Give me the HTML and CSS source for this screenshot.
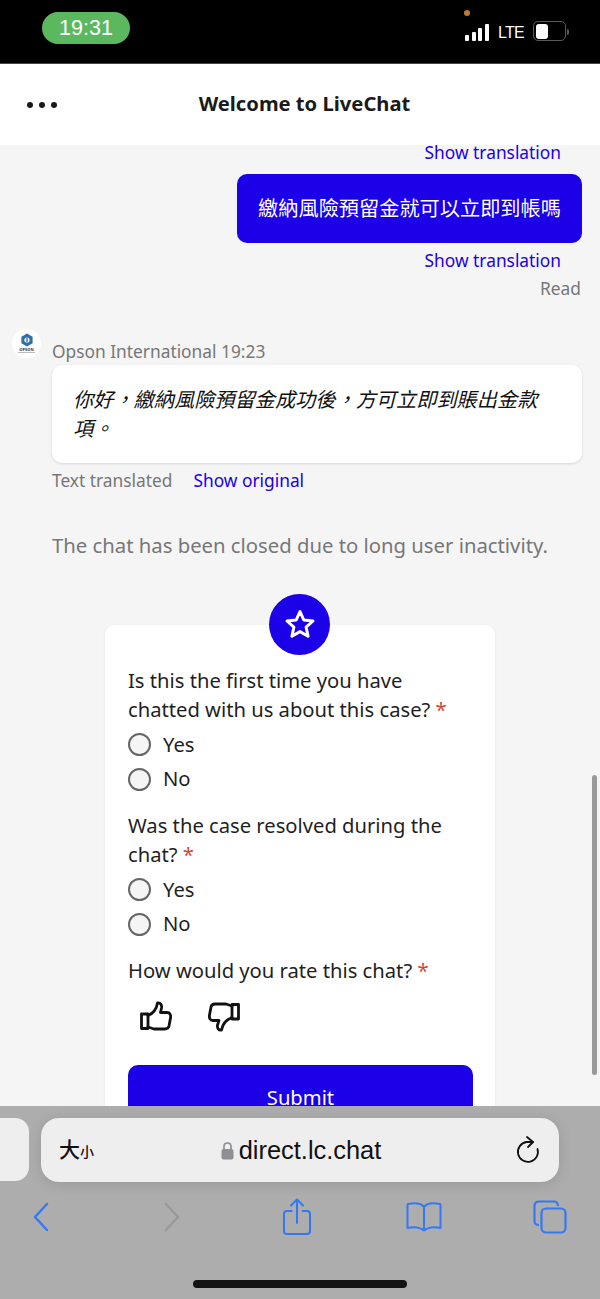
FILE: index.html
```html
<!DOCTYPE html>
<html>
	<head>
		<meta charset="utf-8">
		<title>Welcome to LiveChat</title>
		<meta name="viewport" content="width=device-width, initial-scale=1.0">
		<link rel="stylesheet" href="styles.css">
	</head>
	<body>
		<div class="status-bar">
			<div class="clock">19:31</div>
			<div class="status-right">
				<span class="mic-dot"></span>
				<div class="signal"><i></i><i></i><i></i><i></i></div>
				<span class="lte">LTE</span>
				<div class="battery"><span></span></div>
				<div class="battery-tip"></div>
			</div>
		</div>
		<header class="chat-header">
			<div class="dots"><i></i><i></i><i></i></div>
			<h1>Welcome to LiveChat</h1>
		</header>
		<main class="chat">
			<div class="link-row right first">Show translation</div>
			<div class="bubble-row"><div class="bubble-own">繳納風險預留金就可以立即到帳嗎</div></div>
			<div class="link-row right second">Show translation</div>
			<div class="read">Read</div>

			<div class="agent">
				<div class="avatar">
					<svg width="14" height="14" viewBox="0 0 14 14">
						<path d="M7 0.5 L12.6 3.7 V10.3 L7 13.5 L1.4 10.3 V3.7 Z" fill="#2f6ea8"/>
						<circle cx="7" cy="7" r="2.6" fill="#ffffff"/>
						<path d="M7 5 V9" stroke="#2f6ea8" stroke-width="1.4"/>
					</svg>
					<span class="avatar-name">OPSON</span>
					<span class="avatar-line"></span>
				</div>
				<div class="agent-body">
					<div class="agent-meta">Opson International 19:23</div>
					<div class="bubble-agent">你好，繳納風險預留金成功後，方可立即到賬出金款項。</div>
					<div class="translated"><span>Text translated</span><a>Show original</a></div>
				</div>
			</div>

			<p class="closed">The chat has been closed due to long user inactivity.</p>

			<div class="survey-wrap">
				<div class="star-badge">
					<svg width="36" height="36" viewBox="0 0 36 36">
						<path d="M18 4.5 L21.8 13 L31 14 L24.1 20.2 L26.1 29.3 L18 24.6 L9.9 29.3 L11.9 20.2 L5 14 L14.2 13 Z" fill="none" stroke="#ffffff" stroke-width="3" stroke-linejoin="round"/>
					</svg>
				</div>
				<form class="survey">
					<div class="question">Is this the first time you have chatted with us about this case? <em>*</em></div>
					<div class="option"><span class="radio"></span>Yes</div>
					<div class="option"><span class="radio"></span>No</div>
					<div class="question">Was the case resolved during the chat? <em>*</em></div>
					<div class="option"><span class="radio"></span>Yes</div>
					<div class="option"><span class="radio"></span>No</div>
					<div class="question">How would you rate this chat? <em>*</em></div>
					<div class="thumbs">
						<svg width="32" height="32" viewBox="0 0 32 32" fill="none" stroke="#111111" stroke-width="2.8" stroke-linejoin="round" stroke-linecap="round">
							<path d="M1.5 13 H8 V27.5 H1.5 Z"/>
							<path d="M8 14.5 C13 12.5 16.5 8 17.5 2 C20.5 1.5 22 4 21.5 7 L20.5 11.5 H27 C30 11.5 31 14 30.5 17 L29 25 C28.5 27 27 28 25 28 H14 L8 26"/>
						</svg>
						<svg width="32" height="32" viewBox="0 0 32 32" fill="none" stroke="#111111" stroke-width="2.8" stroke-linejoin="round" stroke-linecap="round">
							<path d="M30.5 3.5 H24 V18 H30.5 Z"/>
							<path d="M24 16.5 C19 18.5 14.5 23 13.5 29 C10.5 29.5 9 27 9.5 24 L11 19.5 H5 C2 19.5 1 17 1.5 14 L3 6 C3.5 4 5 3 7 3 H18 L24 5"/>
						</svg>
					</div>
					<button type="button" class="submit">Submit</button>
				</form>
			</div>
			<div class="scrollbar"></div>
		</main>
		<footer class="safari">
			<div class="tab-prev"></div>
			<div class="url-bar">
				<span class="text-size">大<small>小</small></span>
				<div class="url">
					<svg width="13" height="19" viewBox="0 0 13 19">
						<path d="M3 8 V5.5 C3 3.3 4.5 2 6.5 2 C8.5 2 10 3.3 10 5.5 V8" fill="none" stroke="#8e8e93" stroke-width="1.7"/>
						<rect x="0.5" y="8" width="12" height="10.5" rx="2" fill="#8e8e93"/>
					</svg>
					<span>direct.lc.chat</span>
				</div>
				<svg class="reload" width="24" height="30" viewBox="0 0 24 30" fill="none" stroke="#111111" stroke-width="1.8" stroke-linecap="round" stroke-linejoin="round">
					<path d="M17 8 H10.5 A10 10 0 1 0 21.5 15"/>
					<path d="M11 3 L17 8 L12 13"/>
				</svg>
			</div>
			<nav class="toolbar">
				<svg class="back" width="20" height="32" viewBox="0 0 20 32" fill="none" stroke="#3478f6" stroke-width="2.4" stroke-linecap="round" stroke-linejoin="round"><path d="M15 3 L3 16 L15 29"/></svg>
				<svg class="forward" width="20" height="32" viewBox="0 0 20 32" fill="none" stroke="#999999" stroke-width="2.4" stroke-linecap="round" stroke-linejoin="round"><path d="M5 3 L17 16 L5 29"/></svg>
				<svg class="share" width="30" height="38" viewBox="0 0 30 38" fill="none" stroke="#3478f6" stroke-width="2" stroke-linecap="round" stroke-linejoin="round"><path d="M9.5 13 H5 C3 13 2 14 2 16 V33 C2 35 3 36 5 36 H25 C27 36 28 35 28 33 V16 C28 14 27 13 25 13 H20.5"/><path d="M15 25 V2"/><path d="M9 7.5 L15 1.5 L21 7.5"/></svg>
				<svg class="book" width="36" height="32" viewBox="0 0 36 32" fill="none" stroke="#3478f6" stroke-width="2" stroke-linecap="round" stroke-linejoin="round"><path d="M18 6 C15 2 9 1.5 2 3 C1.5 3 1.5 3.5 1.5 4 V27 C8 25.5 14 26 18 29.5 C22 26 28 25.5 34.5 27 V4 C34.5 3.5 34.5 3 34 3 C27 1.5 21 2 18 6 Z"/><path d="M18 6 V29"/></svg>
				<svg class="tabs" width="34" height="34" viewBox="0 0 34 34" fill="none" stroke="#3478f6" stroke-width="2.2" stroke-linejoin="round"><path d="M6 25 C3 25 1.5 23.5 1.5 21 V6 C1.5 3 3 1.5 6 1.5 H21 C23.5 1.5 25 3 25 6"/><rect x="8.5" y="8.5" width="24" height="24" rx="4.5"/></svg>
			</nav>
			<div class="home-bar"></div>
		</footer>
	</body>
</html>
```

FILE: styles.css
```css
html, body {
	margin: 0;
	padding: 0;
	height: 100%;
}

body {
	width: 600px;
	height: 1299px;
	overflow: hidden;
	display: flex;
	flex-direction: column;
	background-color: #f5f5f5;
	font-family: "Noto Sans", "Noto Sans CJK TC", sans-serif;
	color: #1f1f1f;
}

.status-bar {
	height: 63px;
	flex: none;
	background-color: #000000;
	border-bottom: 1px solid #444444;
	display: flex;
	justify-content: space-between;
	position: relative;
}

.clock {
	margin: 12px 0 0 42px;
	width: 88px;
	height: 32px;
	border-radius: 16px;
	background-color: #5cb85f;
	color: #ffffff;
	font-family: "Liberation Sans", sans-serif;
	font-size: 21.5px;
	line-height: 32px;
	text-align: center;
}

.status-right {
	display: flex;
	align-items: flex-end;
	height: 41px;
	margin-right: 31px;
}

.mic-dot {
	position: absolute;
	left: 464px;
	top: 10px;
	width: 6px;
	height: 6px;
	border-radius: 50%;
	background-color: #c07a28;
}

.signal {
	display: flex;
	align-items: flex-end;
	gap: 2.5px;
}

.signal i {
	display: block;
	width: 4px;
	background-color: #ffffff;
	border-radius: 1px;
}

.signal i:nth-child(1) { height: 6px; }
.signal i:nth-child(2) { height: 9px; }
.signal i:nth-child(3) { height: 13px; }
.signal i:nth-child(4) { height: 17px; }

.lte {
	margin-left: 9px;
	color: #ffffff;
	font-family: "Liberation Sans", sans-serif;
	font-size: 16px;
	letter-spacing: -0.7px;
	line-height: 17px;
}

.battery {
	margin-left: 9px;
	width: 28px;
	height: 15px;
	border: 1.5px solid #5a5a5a;
	border-radius: 5px;
	padding: 1.5px;
	box-sizing: content-box;
}

.battery span {
	display: block;
	width: 12px;
	height: 100%;
	background-color: #ffffff;
	border-radius: 3px;
}

.battery-tip {
	width: 2px;
	height: 6px;
	margin: 0 0 6px 1px;
	background-color: #5a5a5a;
	border-radius: 0 2px 2px 0;
}

.chat-header {
	height: 81px;
	box-sizing: border-box;
	padding: 0 0 4px 9px;
	flex: none;
	background-color: #ffffff;
	position: relative;
	display: flex;
	align-items: center;
	justify-content: center;
}

.chat-header h1 {
	margin: 0;
	font-size: 20.2px;
	font-weight: 700;
	color: #1a1a1a;
}

.dots {
	position: absolute;
	left: 27px;
	top: 38px;
	display: flex;
	gap: 6px;
}

.dots i {
	width: 6px;
	height: 6px;
	border-radius: 50%;
	background-color: #1a1a1a;
}

.chat {
	flex: 1;
	min-height: 0;
	overflow: hidden;
	position: relative;
	font-size: 17.33px;
}

.link-row {
	color: #1c00e8;
	line-height: 24px;
}

.right {
	text-align: right;
	padding-right: 39px;
}

.first {
	margin-top: -5px;
}

.bubble-row {
	display: flex;
	justify-content: flex-end;
	padding: 10px 18px 0 0;
}

.bubble-own {
	width: 345px;
	height: 69px;
	box-sizing: border-box;
	border-radius: 10px;
	background-color: #1c00e8;
	color: #ffffff;
	font-size: 20.2px;
	line-height: 69px;
	text-align: center;
}

.second {
	margin-top: 5px;
}

.read {
	text-align: right;
	padding-right: 19px;
	color: #777777;
	line-height: 24px;
	margin-top: 4px;
}

.agent {
	display: flex;
	margin-top: 29px;
	padding-left: 12px;
}

.avatar {
	width: 29px;
	height: 29px;
	border-radius: 50%;
	background-color: #ffffff;
	flex: none;
	display: flex;
	flex-direction: column;
	align-items: center;
	padding-top: 4px;
	box-sizing: border-box;
}

.avatar-name {
	font-size: 4px;
	line-height: 5px;
	font-weight: 700;
	color: #1a3a5a;
}

.avatar-line {
	width: 17px;
	height: 1px;
	background-color: #bbbbbb;
}

.agent-body {
	margin-left: 11px;
	width: 530px;
}

.agent-meta {
	color: #777777;
	line-height: 24px;
	margin-top: 10px;
}

.bubble-agent {
	margin-top: 2px;
	background-color: #ffffff;
	border-radius: 10px;
	box-shadow: 0 1px 3px rgba(0, 0, 0, 0.12);
	padding: 20px 21px 20px;
	height: 98px;
	box-sizing: border-box;
	font-size: 20.2px;
	line-height: 29px;
	font-style: italic;
	color: #111111;
}

.translated {
	margin-top: 5px;
	line-height: 24px;
	color: #777777;
}

.translated a {
	color: #1c00e8;
	margin-left: 21px;
}

.closed {
	margin: 39px 0 0 52px;
	color: #777777;
	font-size: 20.3px;
	line-height: 28px;
}

.survey-wrap {
	position: relative;
	margin: 66px 0 0 105px;
	width: 390px;
}

.star-badge {
	position: absolute;
	left: 164px;
	top: -31px;
	width: 61px;
	height: 61px;
	border-radius: 50%;
	background-color: #1c00e8;
	display: flex;
	align-items: center;
	justify-content: center;
}

.survey {
	background-color: #ffffff;
	border-radius: 10px;
	box-shadow: 0 1px 3px rgba(0, 0, 0, 0.08);
	padding: 41px 23px 40px;
	font-size: 20.2px;
}

.question {
	line-height: 29px;
	width: 335px;
	margin-top: 16px;
}

.question:first-child {
	margin-top: 0;
}

.question em {
	color: #d5452f;
	font-style: normal;
}

.option {
	display: flex;
	align-items: center;
	gap: 12px;
	height: 35px;
	margin-top: 2px;
}

.option + .option {
	margin-top: 0;
	height: 34px;
}

.radio {
	width: 19px;
	height: 19px;
	margin-top: 2px;
	border: 2px solid #666666;
	border-radius: 50%;
	background-color: #f5f5f5;
}

.thumbs {
	display: flex;
	gap: 36px;
	margin: 16px 0 0 12px;
}

.submit {
	display: block;
	width: 345px;
	height: 64px;
	margin-top: 32px;
	padding-top: 0;
	border: none;
	border-radius: 10px;
	background-color: #1c00e8;
	color: #ffffff;
	font-family: inherit;
	font-size: 20.2px;
}

.scrollbar {
	position: absolute;
	right: 3px;
	top: 630px;
	width: 5px;
	height: 300px;
	border-radius: 3px;
	background-color: #9a9a9a;
}

.safari {
	height: 193px;
	flex: none;
	background-color: #adadad;
	position: relative;
}

.tab-prev {
	position: absolute;
	left: -20px;
	top: 12px;
	width: 49px;
	height: 63px;
	border-radius: 14px;
	background-color: #eeeeee;
}

.url-bar {
	position: absolute;
	left: 41px;
	top: 12px;
	width: 518px;
	height: 64px;
	border-radius: 18px;
	background-color: #eeeeee;
	box-shadow: 0 2px 14px rgba(0, 0, 0, 0.12);
	display: flex;
	align-items: center;
	justify-content: center;
}

.text-size {
	position: absolute;
	left: 18px;
	top: 16px;
	font-family: "Noto Sans CJK TC", sans-serif;
	font-size: 21px;
	line-height: 28px;
	font-weight: 500;
	color: #111111;
}

.text-size small {
	font-size: 14px;
}

.url {
	display: flex;
	align-items: center;
	gap: 5px;
	padding-left: 2px;
	font-family: "Liberation Sans", sans-serif;
	font-size: 25.4px;
	color: #111111;
}

.reload {
	position: absolute;
	right: 19px;
	top: 16px;
}

.toolbar {
	position: absolute;
	left: 32px;
	top: 92px;
	display: flex;
	align-items: center;
}

.forward { margin-left: 109px; }
.share { margin-left: 101px; }
.book { margin-left: 94px; }
.tabs { margin-left: 91px; }

.home-bar {
	position: absolute;
	left: 193px;
	top: 174px;
	width: 214px;
	height: 8px;
	border-radius: 4px;
	background-color: #141414;
}
```
